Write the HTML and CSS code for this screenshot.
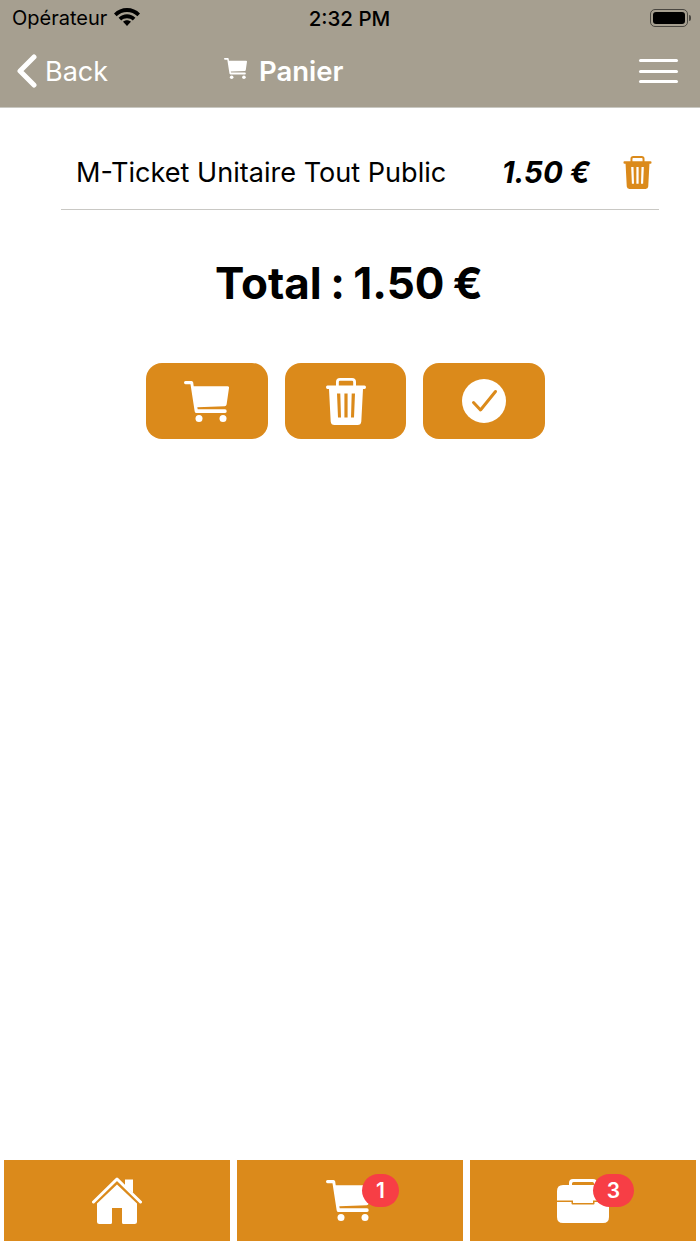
FILE: index.html

```html
<!DOCTYPE html>
<html lang="fr">
<head>
  <meta charset="UTF-8" />
  <meta name="viewport" content="width=device-width, initial-scale=1.0" />
  <title>Panier</title>
  <link rel="stylesheet" href="styles.css">
</head>
<body>
  <svg class="sprites" width="0" height="0">
    <symbol id="cart" viewBox="0 0 45 41">
      <path d="M1.500 0H7.500Q9 0 9.200 1.500L9.700 5.300H43.500Q45.300 5.300 45 7L42.600 23.500Q42.300 25.200 40.700 25.300L13.300 26.300L13.700 28.300H41Q42.700 28.300 42.700 30.200T41 32H12.500Q11 32 10.700 30.500L6.500 3.200H1.500Q0 3.200 0 1.600T1.500 0Z"/>
      <circle cx="15" cy="37.500" r="3.500"/>
      <circle cx="39" cy="37.500" r="3.500"/>
    </symbol>
    <symbol id="trash" viewBox="0 0 40 47">
      <path fill-rule="evenodd" d="M14 0H26Q30 0 30 4V7.500H38.500Q40 7.500 40 9.200T38.500 11H37L35.300 43.500Q35 47 31.500 47H8.500Q5 47 4.700 43.500L3 11H1.500Q0 11 0 9.200T1.500 7.500H10V4Q10 0 14 0ZM14 2.800Q12.800 2.800 12.800 4V7.500H27.200V4Q27.200 2.800 26 2.800ZM11 15.500 12 39.500H15L14.300 15.500ZM18.400 15.500V39.500H21.600V15.500ZM25.700 15.500 25 39.500H28L29 15.500Z"/>
    </symbol>
  </svg>

  <div class="page">
    <header class="topbar">
      <div class="status">
        <div class="status-left">
          <span>Opérateur</span>
          <svg class="wifi" viewBox="0 0 26 18">
            <path d="M13 0C18 0 22.500 2 26 5.400L23.400 8.200C20.600 5.500 17 4 13 4S5.400 5.500 2.600 8.200L0 5.400C3.500 2 8 0 13 0Z"/>
            <path d="M13 6.300C16.200 6.300 19.100 7.500 21.400 9.700L18.800 12.500C17.300 11.100 15.300 10.300 13 10.300S8.700 11.100 7.200 12.500L4.600 9.700C6.900 7.500 9.800 6.300 13 6.300Z"/>
            <path d="M13 12.300C14.500 12.300 15.800 12.800 16.900 13.800L13 18L9.100 13.800C10.200 12.800 11.500 12.300 13 12.300Z"/>
          </svg>
        </div>
        <span class="status-time">2:32 PM</span>
        <div class="battery"><span class="battery-level"></span></div>
      </div>
      <nav class="nav">
        <a class="back">
          <svg class="chevron" viewBox="0 0 20 34"><path d="M17 3 3 17 17 31"/></svg>
          <span>Back</span>
        </a>
        <div class="nav-title">
          <svg class="nav-cart"><use href="#cart"/></svg>
          <span>Panier</span>
        </div>
        <div class="burger"><span></span><span></span><span></span></div>
      </nav>
    </header>

    <main class="content">
      <div class="cart-row">
        <span class="item-name">M-Ticket Unitaire Tout Public</span>
        <span class="item-price">1.50 €</span>
        <svg class="item-trash"><use href="#trash"/></svg>
      </div>

      <h1 class="total">Total : 1.50 €</h1>

      <div class="actions">
        <button class="action action-cart"><svg class="icon-cart"><use href="#cart"/></svg></button>
        <button class="action"><svg class="icon-trash"><use href="#trash"/></svg></button>
        <button class="action">
          <svg class="icon-check" viewBox="0 0 44 44">
            <circle class="check-disc" cx="22" cy="22" r="22"/>
            <path class="check-tick" d="M11.500 23.500 18.500 31 33.500 12.500"/>
          </svg>
        </button>
      </div>
    </main>

    <footer class="tabs">
      <a class="tab">
        <svg class="icon-home" viewBox="0 0 50 47">
          <path class="home-fill" d="M33 2.500H41V16L33 9Z"/>
          <path class="home-roof" d="M1.500 25 25 2 48.500 25"/>
          <path class="home-fill" d="M25 7.500 45 26.500V44.500Q45 47 42.500 47H31.500Q30 47 30 45.500V31H20V45.500Q20 47 18.500 47H7.500Q5 47 5 44.500V26.500Z"/>
        </svg>
      </a>
      <a class="tab tab-cart">
        <svg class="icon-cart"><use href="#cart"/></svg>
        <span class="badge badge-cart">1</span>
      </a>
      <a class="tab">
        <svg class="icon-case" viewBox="0 0 52 44">
          <path class="home-fill" fill-rule="evenodd" d="M16 0H36Q40 0 40 4V6H46Q52 6 52 12V21.500H36V24H16V21.500H0V12Q0 6 6 6H12V4Q12 0 16 0ZM16.500 3Q15 3 15 4.500V6H37V4.500Q37 3 35.500 3Z"/>
          <path class="home-fill" d="M0 23H14.500V24.500Q14.500 25.500 15.500 25.500H36.500Q37.500 25.500 37.500 24.500V23H52V38Q52 44 46 44H6Q0 44 0 38Z"/>
        </svg>
        <span class="badge badge-case">3</span>
      </a>
    </footer>
  </div>
</body>
</html>
```

FILE: styles.css

```css
body {
    margin: 0;
    font-family: Inter, "Liberation Sans", sans-serif;
    background-color: #ffffff;
    color: #000000;
}

.sprites {
    position: absolute;
}

.page {
    display: flex;
    flex-direction: column;
    height: 1244px;
}

/* top bar */
.topbar {
    height: 107px;
    background-color: #a69f90;
    border-bottom: 1px solid #c9c8c2;
}

.status {
    display: grid;
    grid-template-columns: 1fr auto 1fr;
    align-items: center;
    height: 36px;
    padding: 0 10px 0 12px;
    font-size: 20px;
}

.status-left {
    display: flex;
    align-items: center;
    gap: 7px;
}

.wifi {
    width: 26px;
    height: 18px;
    margin-bottom: 3px;
}

.status-time {
    margin-left: -3px;
    font-weight: 500;
    font-size: 20.500px;
}

.battery {
    position: relative;
    box-sizing: border-box;
    justify-self: end;
    width: 38px;
    height: 18px;
    padding: 2px;
    border: 1px solid #4a4741;
    border-radius: 5px;
    margin-right: 2px;
}

.battery-level {
    display: block;
    height: 100%;
    background-color: #000000;
    border-radius: 3px;
}

.battery::after {
    content: "";
    position: absolute;
    right: -4px;
    top: 5px;
    width: 2px;
    height: 6px;
    background-color: #4a4741;
    border-radius: 0 2px 2px 0;
}

.nav {
    display: grid;
    grid-template-columns: 207px 1fr auto;
    align-items: center;
    height: 70px;
    padding: 0 22px 0 17px;
    color: #ffffff;
}

.back {
    display: flex;
    align-items: center;
    gap: 8px;
    font-size: 27px;
}

.chevron {
    width: 20px;
    height: 34px;
    fill: none;
    stroke: #ffffff;
    stroke-width: 5;
    stroke-linecap: round;
    stroke-linejoin: round;
}

.nav-title {
    display: flex;
    align-items: center;
    gap: 12px;
    font-size: 27.500px;
    font-weight: 600;
}

.nav-cart {
    width: 23px;
    height: 21px;
    fill: #ffffff;
    margin-bottom: 6px;
}

.burger {
    display: flex;
    flex-direction: column;
    gap: 7.500px;
}

.burger span {
    width: 39px;
    height: 3px;
    background-color: #ffffff;
    border-radius: 2px;
}

/* cart */
.content {
    flex: 1;
}

.cart-row {
    box-sizing: border-box;
    display: flex;
    align-items: center;
    height: 102px;
    margin: 0 41px 0 61px;
    padding: 27px 7px 0 15px;
    border-bottom: 1px solid #c9c8c4;
}

.item-name {
    flex: 1;
    font-size: 27.100px;
}

.item-price {
    font-size: 29.500px;
    font-weight: 700;
    font-style: italic;
}

.item-trash {
    width: 29px;
    height: 33px;
    margin-left: 33px;
    fill: #db8a1b;
}

.total {
    margin: 48px 0 0;
    padding-right: 2px;
    text-align: center;
    font-size: 44px;
    line-height: 50px;
    font-weight: 700;
    font-feature-settings: "calt" 0;
    word-spacing: -2px;
}

.actions {
    display: flex;
    justify-content: center;
    gap: 17px;
    margin-top: 55px;
    padding-right: 9px;
}

.action {
    display: flex;
    align-items: center;
    justify-content: center;
    width: 121.500px;
    height: 76px;
    padding: 0;
    border: none;
    border-radius: 16px;
    background-color: #db8a1b;
}

.action-cart .icon-cart {
    margin-right: 2px;
}

.icon-cart {
    width: 45px;
    height: 41px;
    fill: #ffffff;
}

.icon-trash {
    width: 40px;
    height: 47px;
    fill: #ffffff;
}

.icon-check {
    width: 44px;
    height: 44px;
}

.check-disc {
    fill: #ffffff;
}

.check-tick {
    fill: none;
    stroke: #db8a1b;
    stroke-width: 3;
    stroke-linecap: round;
    stroke-linejoin: round;
}

/* bottom tabs */
.tabs {
    display: flex;
    gap: 7px;
    padding: 0 4px 3px;
}

.tab {
    position: relative;
    flex: 1;
    display: flex;
    align-items: center;
    justify-content: center;
    height: 81px;
    background-color: #db8a1b;
}

.tab-cart .icon-cart {
    margin-right: 3px;
}

.icon-home {
    width: 50px;
    height: 47px;
}

.home-fill {
    fill: #ffffff;
}

.home-roof {
    fill: none;
    stroke: #ffffff;
    stroke-width: 3;
    stroke-linecap: round;
    stroke-linejoin: round;
}

.icon-case {
    width: 52px;
    height: 44px;
}

.badge {
    position: absolute;
    top: 14px;
    height: 33px;
    line-height: 33px;
    text-align: center;
    border-radius: 17px;
    background-color: #f73e45;
    color: #ffffff;
    font-size: 21px;
    font-weight: 600;
}

.badge-cart {
    left: 125px;
    width: 37px;
}

.badge-case {
    left: 123px;
    width: 41px;
}
```
